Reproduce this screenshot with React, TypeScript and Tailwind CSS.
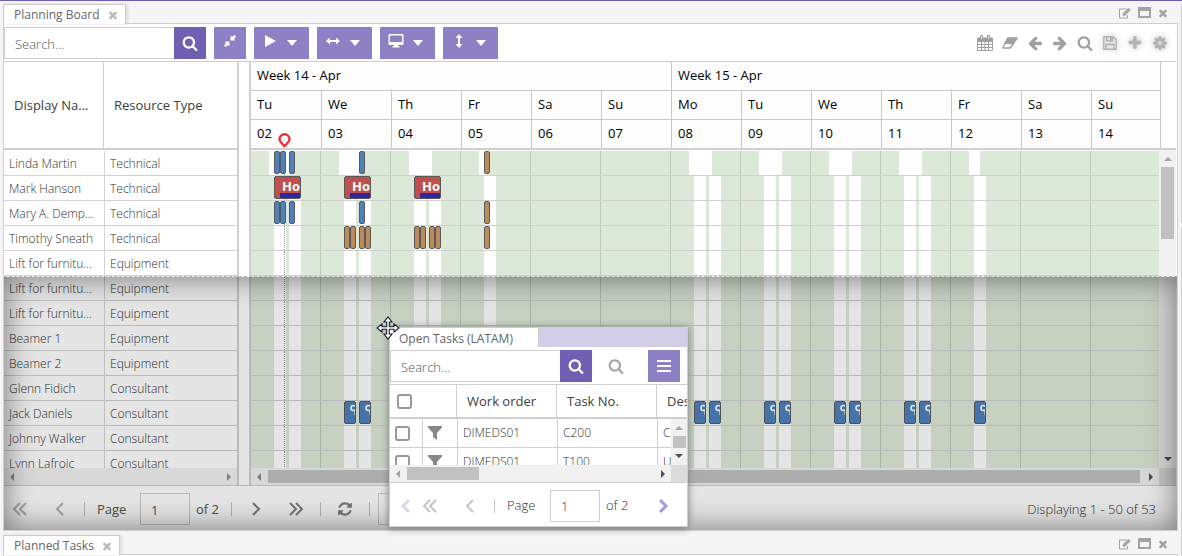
import type { ReactNode } from "react";

interface Resource {
  name: string;
  type: string;
}

interface Bar {
  row: number;
  day: number;
  offset: number;
  kind: "blue" | "brown" | "holiday" | "job";
}

const DAY_WIDTH = 70;

const resources: Resource[] = [
  { name: "Linda Martin", type: "Technical" },
  { name: "Mark Hanson", type: "Technical" },
  { name: "Mary A. Dempsey", type: "Technical" },
  { name: "Timothy Sneath", type: "Technical" },
  { name: "Lift for furniture 1", type: "Equipment" },
  { name: "Lift for furniture 2", type: "Equipment" },
  { name: "Lift for furniture 3", type: "Equipment" },
  { name: "Beamer 1", type: "Equipment" },
  { name: "Beamer 2", type: "Equipment" },
  { name: "Glenn Fidich", type: "Consultant" },
  { name: "Jack Daniels", type: "Consultant" },
  { name: "Johnny Walker", type: "Consultant" },
  { name: "Lynn Lafroic", type: "Consultant" },
];

const days = ["Tu", "We", "Th", "Fr", "Sa", "Su", "Mo", "Tu", "We", "Th", "Fr", "Sa", "Su"];
const dates = ["02", "03", "04", "05", "06", "07", "08", "09", "10", "11", "12", "13", "14"];
const weekend = [4, 5, 11, 12];

const bars: Bar[] = [
  ...[0, 2].flatMap((row): Bar[] => [
    { row, day: 0, offset: 23, kind: "blue" },
    { row, day: 0, offset: 29, kind: "blue" },
    { row, day: 0, offset: 38, kind: "blue" },
    { row, day: 1, offset: 38, kind: "blue" },
    { row, day: 3, offset: 23, kind: "brown" },
  ]),
  ...[0, 1, 2].map((day): Bar => ({ row: 1, day, offset: 23, kind: "holiday" })),
  ...[1, 2].flatMap((day) =>
    [23, 29, 38, 44].map((offset): Bar => ({ row: 3, day, offset, kind: "brown" }))
  ),
  { row: 3, day: 3, offset: 23, kind: "brown" },
  ...[1, 2, 6, 7, 8, 9].flatMap((day) =>
    [23, 38].map((offset): Bar => ({ row: 10, day, offset, kind: "job" }))
  ),
  { row: 10, day: 3, offset: 23, kind: "job" },
  { row: 10, day: 10, offset: 23, kind: "job" },
];

const barStyles = {
  blue: "w-[6px] bg-[#4f81bd]",
  brown: "w-[6px] bg-[#bd8a5a]",
  holiday: "w-[27px] bg-[#c0504d]",
  job: "w-3 bg-[#4f81bd]",
};

// Working hours of one day, as [left, width] pairs
function workingHours(row: number, day: number): number[][] {
  if (weekend.includes(day)) return [];
  const friday = day === 3 || day === 10;
  if (row === 0) return [[18, friday ? 11 : 23]];
  return friday ? [[23, 12]] : [[23, 12], [38, 12]];
}

const glyphs = {
  search:
    "M1216 832q0-185-131.5-316.5t-316.5-131.5-316.5 131.5-131.5 316.5 131.5 316.5 316.5 131.5 316.5-131.5 131.5-316.5zm512 832q0 52-38 90t-90 38q-54 0-90-38l-343-342q-179 124-399 124-143 0-273.5-55.5t-225-150-150-225-55.5-273.5 55.5-273.5 150-225 225-150 273.5-55.5 273.5 55.5 225 150 150 225 55.5 273.5q0 220-124 399l343 343q37 37 37 90z",
  arrow:
    "M1664 896v128q0 53-32.5 90.5t-84.5 37.5h-704l293 294q38 36 38 90t-38 90l-75 76q-37 37-90 37-52 0-91-37l-651-652q-37-37-37-90 0-52 37-91l651-650q38-38 91-38 52 0 90 38l75 74q38 38 38 91t-38 91l-293 293h704q52 0 84.5 37.5t32.5 90.5z",
  cog: "M1152 896q0-106-75-181t-181-75-181 75-75 181 75 181 181 75 181-75 75-181zm512-109v222q0 12-8 23t-20 13l-185 28q-19 54-39 91 35 50 107 138 10 12 10 25t-9 23q-27 37-99 108t-94 71q-12 0-26-9l-138-108q-44 23-91 38-16 136-29 186-7 28-36 28h-222q-14 0-24.5-8.5t-11.5-21.5l-28-184q-49-16-90-37l-141 107q-10 9-25 9-14 0-25-11-126-114-165-168-7-10-7-23 0-12 8-23 15-21 51-66.5t54-70.5q-27-50-41-99l-183-27q-13-2-21-12.5t-8-23.5v-222q0-12 8-23t19-13l186-28q14-46 39-92-40-57-107-138-10-12-10-24 0-10 9-23 26-36 98.5-107.5t94.5-71.5q13 0 26 10l138 107q44-23 91-38 16-136 29-186 7-28 36-28h222q14 0 24.5 8.5t11.5 21.5l28 184q49 16 90 37l142-107q9-9 24-9 13 0 25 10 129 119 165 170 7 8 7 22 0 12-8 23-15 21-51 66.5t-54 70.5q26 50 41 98l183 28q13 2 21 12.5t8 23.5z",
  refresh:
    "M1639 1056q0 5-1 7-64 268-268 434.5t-478 166.5q-146 0-282.5-55t-243.5-157l-129 129q-19 19-45 19t-45-19-19-45v-448q0-26 19-45t45-19h448q26 0 45 19t19 45-19 45l-137 137q71 66 161 102t187 36q134 0 250-65t186-179q11-17 53-117 8-23 30-23h192q13 0 22.5 9.5t9.5 22.5zm25-800v448q0 26-19 45t-45 19h-448q-26 0-45-19t-19-45 19-45l138-138q-148-137-349-137-134 0-250 65t-186 179q-11 17-53 117-8 23-30 23h-199q-13 0-22.5-9.5t-9.5-22.5v-7q65-268 270-434.5t480-166.5q146 0 284 55.5t245 156.5l130-129q19-19 45-19t45 19 19 45z",
  times:
    "M1490 1322q0 40-28 68l-136 136q-28 28-68 28t-68-28l-294-294-294 294q-28 28-68 28t-68-28l-136-136q-28-28-28-68t28-68l294-294-294-294q-28-28-28-68t28-68l136-136q28-28 68-28t68 28l294 294 294-294q28-28 68-28t68 28l136 136q28 28 28 68t-28 68l-294 294 294 294q28 28 28 68z",
  plus: "M1600 736v192q0 40-28 68t-68 28h-416v416q0 40-28 68t-68 28h-192q-40 0-68-28t-28-68v-416h-416q-40 0-68-28t-28-68v-192q0-40 28-68t68-28h416v-416q0-40 28-68t68-28h192q40 0 68 28t28 68v416h416q40 0 68 28t28 68z",
};

function Glyph({ name, className = "size-4" }: { name: keyof typeof glyphs; className?: string }) {
  return (
    <svg viewBox="0 0 1792 1792" fill="currentColor" className={className}>
      <path d={glyphs[name]} />
    </svg>
  );
}

function Chevrons({ double, left, bold }: { double?: boolean; left?: boolean; bold?: boolean }) {
  return (
    <svg
      viewBox="0 0 16 16"
      fill="none"
      stroke="currentColor"
      strokeWidth={bold ? 3 : 2}
      className={`size-4 ${left ? "-scale-x-100" : ""}`}
    >
      {double ? <path d="M2 2l6 6-6 6M8 2l6 6-6 6" /> : <path d="M5 2l6 6-6 6" />}
    </svg>
  );
}

function Caret({ dir, className = "" }: { dir: "up" | "down" | "left" | "right"; className?: string }) {
  const d = {
    up: "M0 6h8L4 2z",
    down: "M0 2h8L4 6z",
    left: "M6 0v8L2 4z",
    right: "M2 0v8l4-4z",
  }[dir];
  return (
    <svg viewBox="0 0 8 8" fill="currentColor" className={`size-2 shrink-0 ${className}`}>
      <path d={d} />
    </svg>
  );
}

function IconButton({ label, className = "size-8", children }: { label: string; className?: string; children: ReactNode }) {
  return (
    <button type="button" aria-label={label} className={`flex shrink-0 items-center justify-center ${className}`}>
      {children}
    </button>
  );
}

function MenuButton({ label, children }: { label: string; children: ReactNode }) {
  return (
    <button
      type="button"
      aria-label={label}
      className="flex h-8 w-[55px] items-center justify-between bg-[#8d80c4] pr-3 pl-2 text-white"
    >
      <svg viewBox="0 0 16 16" className="mb-1 size-4" fill="currentColor">
        {children}
      </svg>
      <svg viewBox="0 0 10 6" className="h-[6px] w-[10px]" fill="currentColor">
        <path d="M0 0h10L5 6z" />
      </svg>
    </button>
  );
}

function SearchBox({ label }: { label: string }) {
  return (
    <div className="flex">
      <input
        type="text"
        aria-label={label}
        placeholder="Search..."
        className="h-8 w-[170px] border border-r-0 border-[#cfcfcf] bg-white px-[10px] pt-px text-[13px] font-light placeholder:text-[#555]"
      />
      <IconButton label="Search" className="size-8 bg-[#6f60b4] text-white">
        <Glyph name="search" />
      </IconButton>
    </div>
  );
}

function TabStrip({ title }: { title: string }) {
  return (
    <div className="flex h-[19px] shrink-0 items-start justify-between">
      <div className="relative z-10 flex h-5 items-center gap-[7px] border border-b-0 border-[#ccc] bg-white pt-px pr-[6px] pl-[10px] text-xs text-[#666] shadow-[2px_0_3px_#ddd]">
        <span>{title}</span>
        <button type="button" aria-label={`Close ${title}`} className="text-[#bbb]">
          <Glyph name="times" className="size-3" />
        </button>
      </div>
      <div className="flex h-[17px] items-center gap-[6px] pr-[9px] text-[#a3a3a3]">
        <button type="button" aria-label="Edit">
          <svg viewBox="0 0 14 12" className="h-3 w-[14px]" fill="none" stroke="currentColor">
            <path d="M8.500 2H1.500v9h8V8" />
            <path d="M5 6.500v2h2L12.500 3l-2-2z" fill="currentColor" strokeWidth="0.500" />
          </svg>
        </button>
        <button type="button" aria-label="Maximize">
          <svg viewBox="0 0 13 11" className="h-[11px] w-[13px]" fill="none" stroke="currentColor">
            <path d="M1 3v7h11V3" strokeWidth="2" />
            <path d="M0 2h13" strokeWidth="4" />
          </svg>
        </button>
        <button type="button" aria-label="Close">
          <Glyph name="times" className="size-3" />
        </button>
      </div>
    </div>
  );
}

function Toolbar() {
  return (
    <div className="mr-px flex items-center justify-between border-b border-[#cfcfcf] pt-[3px] pr-2 pb-[2px]">
      <div className="flex gap-2">
        <SearchBox label="Search resources" />
        <IconButton label="Collapse" className="size-8 bg-[#8d80c4] text-white">
          <svg viewBox="0 0 12 12" className="mb-1 size-3" fill="currentColor">
            <path d="M6.500 5.500v-5l1.500 1.500L10.500 0 12 1.500 10 4l1.500 1.500zM5.500 6.500v5L4 10l-2.500 2L0 10.500 2 8 .500 6.500z" />
          </svg>
        </IconButton>
        <MenuButton label="Play">
          <path d="M3 2l11 6-11 6z" />
        </MenuButton>
        <MenuButton label="Horizontal zoom">
          <path d="M1 8l4-3.500v2.500h6V4.500L15 8l-4 3.500V9H5v2.500z" />
        </MenuButton>
        <MenuButton label="View">
          <path d="M1.500 1h13q1 0 1 1v9q0 1-1 1H10v1h1.500v1.500h-7V13H6v-1H1.500q-1 0-1-1V2q0-1 1-1zM2 2.500v6.500h12V2.500z" fillRule="evenodd" />
        </MenuButton>
        <MenuButton label="Vertical zoom">
          <path d="M8 1l3.500 4H9v6h2.500L8 15l-3.500-4H7V5H4.500z" />
        </MenuButton>
      </div>
      <div className="flex items-center gap-[9px] text-[#a0a0a0]">
        <IconButton label="Calendar" className="size-4">
          <svg viewBox="0 0 16 16" className="size-4" fill="none" stroke="currentColor">
            <path d="M.500 3.500h15v12H.500zM.500 6.500h15M.500 9.500h15M.500 12.500h15M4.500 6v9M8 6v9M11.500 6v9" />
            <path d="M.500 3h15v3H.500z" fill="currentColor" />
            <path d="M4.500 1v3M11.500 1v3" strokeWidth="3" strokeLinecap="round" />
            <path d="M4.500 1v3M11.500 1v3" stroke="#fff" strokeWidth="0.800" />
          </svg>
        </IconButton>
        <IconButton label="Clear" className="size-4">
          <svg viewBox="0 0 17 12" className="h-3 w-[17px]" fill="currentColor">
            <path d="M6.500 0H16q1.200.300.700 1.500L10 11q-.700 1-1.700 1H1Q0 11.800.300 10.800L5 1Q5.500.100 6.500 0zM3.800 7L1.700 10.500h6.500L10.500 7z" fillRule="evenodd" />
          </svg>
        </IconButton>
        <IconButton label="Previous" className="size-4">
          <Glyph name="arrow" />
        </IconButton>
        <IconButton label="Next" className="size-4">
          <Glyph name="arrow" className="size-4 -scale-x-100" />
        </IconButton>
        <IconButton label="Find" className="size-4">
          <Glyph name="search" />
        </IconButton>
        <IconButton label="Save" className="size-4 opacity-80 drop-shadow-[0_0_3px_#aaa]">
          <svg viewBox="0 0 14 14" className="size-[14px]" fill="none" stroke="currentColor" strokeWidth="1.400">
            <path d="M.800.800h9.400l3 3v9.400H.800zM3.500.800v4h6v-4M3 13V8.500h8V13" />
            <path d="M7 1h2v3H7z" fill="currentColor" stroke="none" />
          </svg>
        </IconButton>
        <IconButton label="Add" className="size-4 opacity-80 drop-shadow-[0_0_3px_#aaa]">
          <Glyph name="plus" />
        </IconButton>
        <IconButton label="Settings" className="size-4 opacity-80 drop-shadow-[0_0_3px_#aaa]">
          <Glyph name="cog" />
        </IconButton>
      </div>
    </div>
  );
}

function ResourceGrid() {
  return (
    <div className="flex w-[235px] shrink-0 flex-col border-r-2 border-[#cfcfcf]">
      <div className="flex h-[88px] shrink-0 items-stretch border-b-2 border-[#cfcfcf] text-[13px] text-[#404040]">
        <div className="flex w-[100px] items-center border-r border-[#cfcfcf] pt-[2px] pl-[10px]">Display Na...</div>
        <div className="flex items-center pt-[2px] pl-[10px]">Resource Type</div>
      </div>
      <div className="min-h-0 flex-1 overflow-hidden pt-px">
        <table className="w-full table-fixed border-separate border-spacing-0 text-xs font-light text-[#303030]">
          <colgroup>
            <col className="w-[101px]" />
            <col />
          </colgroup>
          <tbody>
            {resources.map((r) => (
              <tr key={r.name} className="h-[25px]">
                <td className="truncate border-r border-b border-[#d5d5d5] p-0 pt-[2px] pr-2 pl-[5px]">{r.name}</td>
                <td className="truncate border-b border-[#d0d0d0] p-0 pt-[2px] pl-[5px]">{r.type}</td>
              </tr>
            ))}
          </tbody>
        </table>
      </div>
      <div className="flex h-[17px] shrink-0 items-center justify-between bg-[#f1f1f1] px-1 text-[#909090]">
        <Caret dir="left" />
        <Caret dir="right" />
      </div>
    </div>
  );
}

function TimelineBar({ bar }: { bar: Bar }) {
  return (
    <div
      className={`absolute top-0 h-[23px] overflow-hidden rounded-[2px] border border-[#595959] ${barStyles[bar.kind]}`}
      style={{ left: bar.day * DAY_WIDTH + bar.offset }}
    >
      {bar.kind === "holiday" && (
        <>
          <span className="block pl-[7px] text-[13px] leading-[19px] font-bold text-white">Ho</span>
          <span className="absolute right-0 bottom-0 h-[5px] w-5 bg-[#3026a0]" />
        </>
      )}
      {bar.kind === "job" && (
        <svg viewBox="0 0 10 21" className="h-[21px] w-[10px]" fill="none" stroke="#fff">
          <circle cx="8.500" cy="6" r="2.500" strokeWidth="1.600" />
          <path d="M9.500 9v4" strokeOpacity="0.600" />
        </svg>
      )}
    </div>
  );
}

function Timeline() {
  return (
    <div className="flex min-w-0 flex-1 flex-col border-l-2 border-[#cfcfcf]">
      <div className="relative h-[88px] shrink-0 overflow-hidden border-b-2 border-[#cfcfcf] text-[13px] text-black">
        <div className="w-[910px] border-r border-[#c8c8c8] bg-[#fdfdfd]">
          <div className="flex h-[29px] items-center border-b border-[#c8c8c8]">
            <div className="w-[420px] pl-[6px]">Week 14 - Apr</div>
            <div className="flex h-full items-center border-l border-[#c8c8c8] pl-[6px]">Week 15 - Apr</div>
          </div>
          {[days, dates].map((labels, i) => (
            <div key={i} className={`flex ${i === 0 ? "h-[29px] border-b border-[#c8c8c8]" : "h-7"}`}>
              {labels.map((label, d) => (
                <div
                  key={d}
                  className={`flex w-[70px] shrink-0 items-center pl-[6px] ${d > 0 ? "border-l border-[#c8c8c8]" : ""}`}
                >
                  {label}
                </div>
              ))}
            </div>
          ))}
        </div>
        <svg viewBox="0 0 14 15" className="absolute bottom-0 left-[27px] h-[15px] w-[14px]" fill="#fff" stroke="#f03038" strokeWidth="2.400">
          <path d="M6.500 13Q1.500 8.500 1.500 6.300a5 5 0 0 1 10 0Q11.500 8.500 6.500 13z" />
        </svg>
      </div>
      <div className="flex min-h-0 flex-1">
        <div className="flex min-w-0 flex-1 flex-col">
          <div className="min-h-0 flex-1 overflow-hidden pt-px">
            {resources.map((r, row) => (
              <div key={r.name} className="relative h-[25px] border-b border-[#cfcfcf] bg-[#dde9d8]">
                {days.map((_, day) => (
                  <div key={day}>
                    {workingHours(row, day).map(([left, width]) => (
                      <div
                        key={left}
                        className="absolute inset-y-0 bg-white"
                        style={{ left: day * DAY_WIDTH + left, width }}
                      />
                    ))}
                    <div
                      className="absolute inset-y-0 w-px bg-[#bdc9b9]"
                      style={{ left: (day + 1) * DAY_WIDTH - 1 }}
                    />
                  </div>
                ))}
                {/* current time */}
                <div className="absolute inset-y-0 left-[33px] border-l border-dotted border-[#999]" />
                {bars
                  .filter((b) => b.row === row)
                  .map((b) => (
                    <TimelineBar key={`${b.day}-${b.offset}`} bar={b} />
                  ))}
              </div>
            ))}
          </div>
          <div className="flex h-[17px] shrink-0 items-center bg-[#f1f1f1] text-[#555]">
            <Caret dir="left" className="mx-1 text-[#888]" />
            <div className="ml-px h-[13px] flex-1 bg-[#c1c1c1]" />
            <Caret dir="right" className="mr-1 ml-[7px]" />
          </div>
        </div>
        <div className="flex w-[17px] shrink-0 flex-col items-center bg-[#f1f1f1] text-[#505050]">
          <Caret dir="up" className="mt-[5px] text-[#a3a3a3]" />
          <div className="mt-1 h-[72px] w-[13px] bg-[#c1c1c1]" />
          <Caret dir="down" className="mt-auto mb-[5px]" />
          <div className="h-[17px] w-full bg-[#dcdcdc]" />
        </div>
      </div>
    </div>
  );
}

function Separator({ className = "mx-2" }: { className?: string }) {
  return <div className={`h-[14px] w-px shrink-0 bg-[#c4c4c4] ${className}`} />;
}

function PageField({ id }: { id: string }) {
  return (
    <>
      <label htmlFor={id} className="ml-1 w-[43px] shrink-0 pt-px">
        Page
      </label>
      <input
        id={id}
        type="text"
        defaultValue="1"
        className="h-8 w-[50px] shrink-0 border border-[#cfcfcf] px-[10px] pt-px text-[13px]"
      />
      <span className="ml-[6px] w-[27px] shrink-0 pt-px">of 2</span>
    </>
  );
}

function BoardPager() {
  return (
    <div className="flex h-11 shrink-0 items-center pt-[2px] text-[13px] text-[#555]">
      <IconButton label="First page" className="size-8 text-[#b4b4b4]">
        <Chevrons double left />
      </IconButton>
      <IconButton label="Previous page" className="ml-2 size-8 text-[#b4b4b4]">
        <Chevrons left />
      </IconButton>
      <Separator />
      <PageField id="board-page" />
      <Separator />
      <IconButton label="Next page" className="size-8 text-[#808080]">
        <Chevrons />
      </IconButton>
      <IconButton label="Last page" className="ml-2 size-8 text-[#808080]">
        <Chevrons double />
      </IconButton>
      <Separator />
      <IconButton label="Refresh" className="size-8 text-[#808080]">
        <Glyph name="refresh" />
      </IconButton>
      <Separator />
      <input type="text" aria-label="Page size" className="h-8 w-[170px] border border-[#cfcfcf]" />
      <span className="ml-auto pt-px pr-[21px] font-light text-[#303030]">Displaying 1 - 50 of 53</span>
    </div>
  );
}

const tasks = [
  { order: "DIMEDS01", no: "C200", description: "Call" },
  { order: "DIMEDS01", no: "T100", description: "Update" },
];

const checkbox = "block size-[15px] appearance-none rounded-[3px] border-2 border-[#999] bg-white";

function OpenTasks() {
  return (
    <div className="absolute top-[326px] left-[389px] w-[299px] border border-t-0 border-[#cfcfcf] bg-white shadow-[0_1px_8px_#777]">
      <div className="flex h-5 bg-[#d3cee8]">
        <div className="w-[149px] border-t border-r border-[#ccc] bg-white pl-[9px] text-xs leading-[22px] text-[#666]">
          Open Tasks (LATAM)
        </div>
      </div>
      <div className="flex border-b border-[#cfcfcf] pt-[3px] pb-[2px]">
        <SearchBox label="Search tasks" />
        <IconButton label="Find" className="ml-2 size-8 text-[#a8a8a8]">
          <Glyph name="search" />
        </IconButton>
        <IconButton label="Menu" className="ml-4 size-8 bg-[#8d80c4] text-white">
          <svg viewBox="0 0 14 12" className="h-3 w-[14px]" stroke="currentColor" strokeWidth="2">
            <path d="M0 1h14M0 6h14M0 11h14" />
          </svg>
        </IconButton>
      </div>
      <div className="flex h-[34px] overflow-hidden border-b-2 border-[#cfcfcf] text-[13px] text-[#404040]">
        <div className="flex w-[67px] shrink-0 items-center border-r border-[#cfcfcf] pl-[7px]">
          <input type="checkbox" aria-label="Select all" className={checkbox} />
        </div>
        <div className="flex w-[100px] shrink-0 items-center border-r border-[#cfcfcf] pt-px pl-[10px]">Work order</div>
        <div className="flex w-[100px] shrink-0 items-center border-r border-[#cfcfcf] pt-px pl-[10px]">Task No.</div>
        <div className="flex items-center pt-px pl-[10px] whitespace-nowrap">Description</div>
      </div>
      <div className="flex h-[63px]">
        <div className="flex min-w-0 flex-1 flex-col">
          <div className="min-h-0 flex-1 overflow-hidden">
            <table className="w-[368px] table-fixed border-separate border-spacing-0 text-xs font-light text-[#303030]">
              <colgroup>
                <col className="w-[33px]" />
                <col className="w-[35px]" />
                <col className="w-[100px]" />
                <col className="w-[100px]" />
                <col />
              </colgroup>
              <tbody>
                {tasks.map((t) => (
                  <tr key={t.no} className="h-[29px]">
                    <td className="border-r border-b border-[#d0d0d0] p-0 pl-[5px]">
                      <input type="checkbox" aria-label={`Select ${t.no}`} className={checkbox} />
                    </td>
                    <td className="border-r border-b border-[#d0d0d0] p-0 pl-[5px]">
                      <svg viewBox="0 0 14 14" className="h-[14px] w-[14px]" fill="#888">
                        <path d="M0 0h14v1.500L9 7v7l-4-3V7L0 1.500z" />
                      </svg>
                    </td>
                    <td className="border-r border-b border-[#d0d0d0] p-0 pl-[5px]">{t.order}</td>
                    <td className="border-r border-b border-[#d0d0d0] p-0 pl-[5px]">{t.no}</td>
                    <td className="border-b border-[#d0d0d0] p-0 pl-[5px]">{t.description}</td>
                  </tr>
                ))}
              </tbody>
            </table>
          </div>
          <div className="flex h-[17px] shrink-0 items-center bg-[#f1f1f1] text-[#505050]">
            <Caret dir="left" className="mx-1 text-[#a3a3a3]" />
            <div className="ml-px h-[13px] w-[72px] bg-[#c1c1c1]" />
            <Caret dir="right" className="mr-1 ml-auto" />
          </div>
        </div>
        <div className="flex w-4 shrink-0 flex-col items-center bg-[#f1f1f1] text-[#505050]">
          <Caret dir="up" className="mt-[5px] text-[#a3a3a3]" />
          <div className="mt-1 h-3 w-[13px] bg-[#c1c1c1]" />
          <Caret dir="down" className="mt-auto mb-[5px]" />
          <div className="h-[17px] w-full bg-[#dcdcdc]" />
        </div>
      </div>
      <div className="flex h-11 items-center border-t border-[#cfcfcf] pt-[2px] text-[13px] font-light text-[#303030]">
        <IconButton label="Scroll left" className="ml-2 size-4 text-[#d9d5ec]">
          <Chevrons left bold />
        </IconButton>
        <IconButton label="First page" className="size-8 text-[#c4c4c4]">
          <Chevrons double left />
        </IconButton>
        <IconButton label="Previous page" className="ml-2 size-8 text-[#c4c4c4]">
          <Chevrons left />
        </IconButton>
        <Separator />
        <PageField id="tasks-page" />
        <IconButton label="Scroll right" className="mr-4 ml-auto size-4 text-[#a79cd6]">
          <Chevrons bold />
        </IconButton>
      </div>
    </div>
  );
}

function MoveCursor() {
  return (
    <svg
      viewBox="0 0 24 24"
      className="absolute top-[315px] left-[376px] size-6"
      fill="#fff"
      stroke="#1c1c2c"
      strokeWidth="1.100"
    >
      <path d="M12 1l4 5h-2.700v4.700H18V8l5 4-5 4v-2.700h-4.700V18H16l-4 5-4-5h2.700v-4.700H6V16l-5-4 5-4v2.700h4.700V6H8z" />
    </svg>
  );
}

export default function App() {
  return (
    <div className="relative flex h-screen overflow-hidden border-t border-[#6f5fb3] bg-[#f5f5f5] font-['Open_Sans',sans-serif]">
      <div className="ml-[3px] flex min-w-0 flex-1 flex-col pt-[3px]">
        <TabStrip title="Planning Board" />
        <main className="relative flex min-h-0 flex-1 flex-col border border-[#cfcfcf] bg-white">
          <Toolbar />
          <div className="mr-px flex min-h-0 flex-1 gap-[10px] border-b border-[#cfcfcf]">
            <ResourceGrid />
            <Timeline />
          </div>
          <BoardPager />
          {/* drop target for the dragged panel */}
          <div className="pointer-events-none absolute inset-x-0 top-1/2 bottom-0 -mt-px border-t border-dashed border-[#b8b8b8] bg-black/10 bg-clip-padding shadow-[inset_0_0_30px_rgba(0,0,0,0.5)]" />
        </main>
        <div className="mt-1 shrink-0">
          <TabStrip title="Planned Tasks" />
          <div className="h-[2px] border border-b-0 border-[#cfcfcf] bg-white" />
        </div>
      </div>
      <div className="flex w-1 shrink-0 flex-col gap-1 pt-[3px]">
        <div className="h-[219px] border-r border-[#cfcfcf]" />
        <div className="flex-1 border-r border-[#cfcfcf]" />
      </div>
      <OpenTasks />
      <MoveCursor />
    </div>
  );
}
